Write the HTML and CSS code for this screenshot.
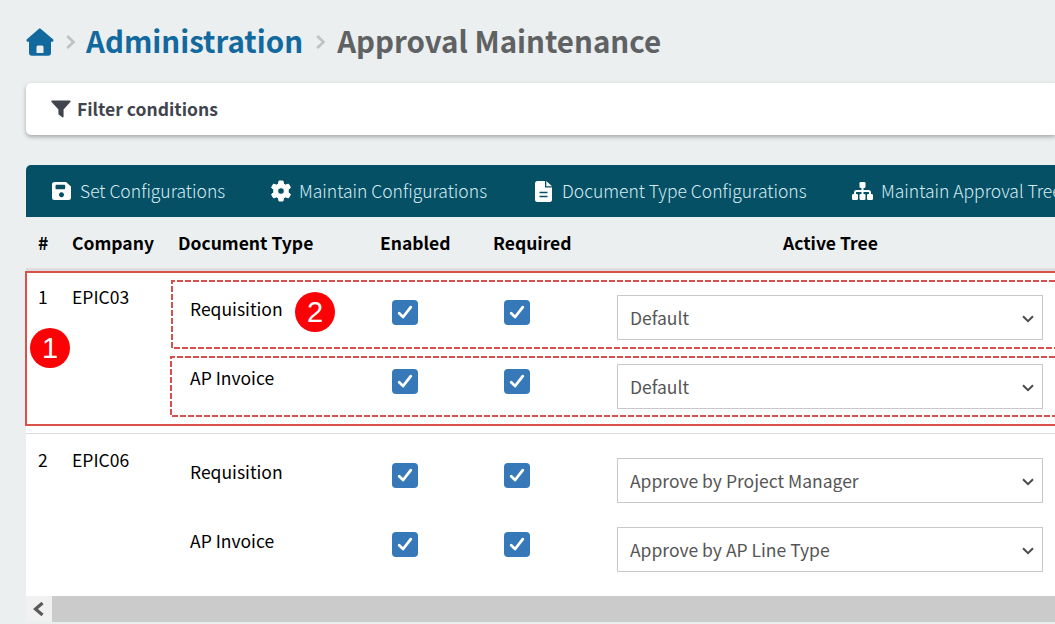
FILE: index.html
```html
<!DOCTYPE html>
<html lang="en">
  <head>
    <meta charset="UTF-8" />
    <meta name="viewport" content="width=device-width, initial-scale=1.0" />
    <title>Approval Maintenance</title>
    <link rel="stylesheet" href="styles.css">
  </head>
  <body>
    <!-- Shared icons -->
    <svg class="icon-defs">
      <symbol id="check" viewBox="0 0 26 25">
        <path d="M7.200 13.300l3.900 3.700L18.800 7.200" fill="none" stroke="#fff" stroke-width="2.800" stroke-linecap="round" stroke-linejoin="round" />
      </symbol>
      <symbol id="chevron" viewBox="0 0 12 8">
        <path d="M1 1.200l5 5 5-5" fill="none" stroke="#4a4a4a" stroke-width="2" />
      </symbol>
      <symbol id="separator" viewBox="0 0 10 14">
        <path d="M1.200 1l6.300 6-6.300 6" fill="none" stroke="#bfc1c3" stroke-width="2.600" />
      </symbol>
    </svg>

    <nav class="breadcrumb">
      <svg class="home" viewBox="0 0 28 28">
        <path fill="#12699e" fill-rule="evenodd" d="M13 .7q.8-.7 1.600 0L27 11.200q.8.8.3 1.700-.5.900-1.600.9H25v11q0 3-3 3H6q-3 0-3-3v-11h-.8q-1.100 0-1.600-.9-.5-.9.3-1.700zM12 17.500q-1.500 0-1.500 1.500V25h7v-6Q17.500 17.500 16 17.500z" />
      </svg>
      <svg class="separator"><use href="#separator" /></svg>
      <a class="crumb-link">Administration</a>
      <svg class="separator separator-last"><use href="#separator" /></svg>
      <span class="crumb-current">Approval Maintenance</span>
    </nav>

    <div class="filter-panel">
      <svg class="filter-icon" viewBox="0 0 21 18">
        <path fill="#3f444d" d="M1.200 0h18.500q1.300.2.800 1.500L13.200 9.500v7.700q-.3 1-1.300.5L8.300 15q-.5-.5-.5-1V9.500L.4 1.500Q-.1.200 1.200 0z" />
      </svg>
      <span>Filter conditions</span>
    </div>

    <div class="grid-panel">
      <div class="toolbar">
        <a class="tool tool-save">
          <svg width="19" height="18" viewBox="0 0 19 18">
            <path fill="#fff" fill-rule="evenodd" d="M2.500 0H14l5 4.500v11Q19 18 16.500 18h-14Q0 18 0 15.500v-13Q0 0 2.500 0zM4.500 2.700q-1 0-1 1v2.600q0 1 1 1h7.700q1 0 1-1V3.700q0-1-1-1zM9.500 10.300a2.500 2.500 0 1 0 .01 0z" />
          </svg>
          <span>Set Configurations</span>
        </a>
        <a class="tool tool-maintain">
          <svg width="22" height="22" viewBox="0 0 22 22">
            <path fill="#fff" fill-rule="evenodd" stroke="#fff" stroke-width="1" stroke-linejoin="round" d="M9 1h4l.6 3 1.900 1.100 3-1 2 3.500-2.300 2v2.800l2.300 2-2 3.500-3-1-1.900 1.100-.6 3H9l-.6-3-1.900-1.100-3 1-2-3.500 2.300-2V9.600l-2.300-2 2-3.500 3 1L8.400 4zM11 7.700a3.300 3.300 0 1 0 .01 0z" />
          </svg>
          <span>Maintain Configurations</span>
        </a>
        <a class="tool tool-document">
          <svg width="17" height="21" viewBox="0 0 17 21">
            <path fill="#fff" d="M2.500 0H10v6.500h7v12Q17 21 14.500 21h-12Q0 21 0 18.500v-16Q0 0 2.500 0zM11.300 0L17 5.300h-5.700z" />
            <path stroke="#065066" stroke-width="1.500" d="M4.500 11.400h8M4.500 15.400h8" />
          </svg>
          <span>Document Type Configurations</span>
        </a>
        <a class="tool tool-tree">
          <svg width="21" height="18" viewBox="0 0 21 18">
            <path fill="none" stroke="#fff" stroke-width="2" d="M10.500 4v10M3 14v-3.500Q3 9 4.500 9h12Q18 9 18 10.500V14" />
            <g fill="#fff">
              <rect x="7.500" y="0" width="6" height="6" rx="1.300" />
              <rect x="0" y="12" width="6" height="6" rx="1.300" />
              <rect x="7.500" y="12" width="6" height="6" rx="1.300" />
              <rect x="15" y="12" width="6" height="6" rx="1.300" />
            </g>
          </svg>
          <span>Maintain Approval Tree</span>
        </a>
      </div>

      <div class="columns table-head">
        <span>#</span>
        <span>Company</span>
        <span>Document Type</span>
        <span>Enabled</span>
        <span>Required</span>
        <span class="head-tree">Active Tree</span>
      </div>

      <div class="company-row">
        <span>1</span>
        <span>EPIC03</span>
        <div class="documents">
          <div class="document">
            <span>Requisition</span>
            <svg class="checkbox"><use href="#check" /></svg>
            <svg class="checkbox"><use href="#check" /></svg>
            <div class="select">Default<svg><use href="#chevron" /></svg></div>
          </div>
          <div class="document">
            <span>AP Invoice</span>
            <svg class="checkbox"><use href="#check" /></svg>
            <svg class="checkbox"><use href="#check" /></svg>
            <div class="select">Default<svg><use href="#chevron" /></svg></div>
          </div>
        </div>
      </div>

      <div class="company-row">
        <span>2</span>
        <span>EPIC06</span>
        <div class="documents">
          <div class="document">
            <span>Requisition</span>
            <svg class="checkbox"><use href="#check" /></svg>
            <svg class="checkbox"><use href="#check" /></svg>
            <div class="select">Approve by Project Manager<svg><use href="#chevron" /></svg></div>
          </div>
          <div class="document">
            <span>AP Invoice</span>
            <svg class="checkbox"><use href="#check" /></svg>
            <svg class="checkbox"><use href="#check" /></svg>
            <div class="select">Approve by AP Line Type<svg><use href="#chevron" /></svg></div>
          </div>
        </div>
      </div>

      <div class="scrollbar">
        <div class="scroll-button">
          <svg width="12" height="14" viewBox="0 0 12 14">
            <path d="M9.500 1L2.500 7l7 6" fill="none" stroke="#5a5a5a" stroke-width="3.200" />
          </svg>
        </div>
        <div class="scroll-thumb"></div>
      </div>
    </div>

    <!-- Callouts drawn over the table -->
    <div class="outline"></div>
    <svg class="dashes" width="1055" height="624">
      <path d="M1055 281H172V348H1055" />
      <path d="M1055 357H171V416H1055" />
    </svg>
    <div class="callout callout-one">1</div>
    <div class="callout callout-two">2</div>
  </body>
</html>
```

FILE: styles.css
```css
* {
  box-sizing: border-box;
}

body {
  position: relative;
  width: 1055px;
  height: 624px;
  margin: 0;
  padding-left: 26px;
  overflow: hidden;
  background-color: #ebeff0;
  color: #111;
  font-family: "Noto Sans CJK SC", "Noto Sans", sans-serif;
  font-size: 17.5px;
  line-height: 26px;
  white-space: nowrap;
}

svg {
  display: block;
  flex-shrink: 0;
}

.icon-defs {
  display: none;
}

.breadcrumb {
  display: flex;
  align-items: center;
  height: 83px;
  font-size: 29.5px;
  font-weight: bold;
  line-height: 40px;
}

.crumb-link,
.crumb-current {
  padding-bottom: 4px;
}

.home {
  width: 28px;
  height: 28px;
}

.separator {
  width: 10px;
  height: 14px;
  margin: 0 10px 0 12px;
}

.separator-last {
  margin: 0 11px 0 13px;
}

.crumb-link {
  color: #12699e;
}

.crumb-current {
  color: #606163;
}

.filter-panel {
  display: flex;
  align-items: center;
  gap: 6px;
  height: 52px;
  padding-left: 25px;
  border-radius: 5px 0 0 5px;
  background-color: #fff;
  box-shadow: 0 2px 4px rgba(0, 0, 0, 0.3);
  color: #3f444d;
  font-weight: bold;
}

.filter-icon {
  width: 20px;
  height: 18px;
}

.grid-panel {
  margin-top: 30px;
}

.toolbar {
  display: flex;
  height: 52px;
  padding-left: 26px;
  border-radius: 5px 0 0 0;
  background-color: #065066;
  color: #d5ecf3;
  font-weight: 300;
}

.tool {
  display: flex;
  align-items: center;
  gap: 9px;
  flex-shrink: 0;
}

.tool-save {
  width: 218px;
}

.tool-maintain {
  width: 265px;
  gap: 7px;
}

.tool-document {
  width: 317px;
  gap: 10px;
}

.tool-tree {
  gap: 8px;
}

.columns {
  display: grid;
  grid-template-columns: 34px 106px 202px 113px 112px 450px;
}

.table-head {
  align-items: center;
  height: 53px;
  padding-left: 12px;
  border-bottom: 2px solid #ddd;
  color: #000;
  font-weight: bold;
}

.head-tree {
  padding-left: 178px;
}

.company-row {
  display: grid;
  grid-template-columns: 34px 118px 877px;
  height: 163px;
  padding: 12px 0 12px 12px;
  border-top: 1px solid #ddd;
  background-color: #fff;
  color: #000;
  line-height: 28px;
}

.document {
  display: grid;
  grid-template-columns: 202px 112.4px 112.6px 426px;
  align-items: start;
  height: 69px;
  padding-top: 12px;
}

.checkbox {
  width: 26px;
  height: 25px;
  margin-top: 5px;
  border-radius: 4px;
  background-color: #3678b8;
}

.select {
  display: flex;
  align-items: center;
  justify-content: space-between;
  height: 45px;
  padding: 0 8px 0 12px;
  border: 1px solid #c8c8cb;
  color: #555;
}

.select svg {
  width: 12px;
  height: 8px;
  margin-top: 3px;
}

.scrollbar {
  display: flex;
  height: 26px;
}

.scroll-button {
  display: flex;
  align-items: center;
  justify-content: center;
  width: 26px;
  background-color: #f1f1f1;
}

.scroll-thumb {
  flex: 1;
  background-color: #cbcbcb;
}

.outline {
  position: absolute;
  top: 271px;
  left: 25px;
  width: 1040px;
  height: 155px;
  border: 2px solid #dc504c;
}

.dashes {
  position: absolute;
  top: 0;
  left: 0;
  fill: none;
  stroke: #d8504c;
  stroke-width: 2;
  stroke-dasharray: 6 2;
}

.callout {
  position: absolute;
  width: 40px;
  height: 40px;
  border-radius: 50%;
  background-color: #fb0207;
  color: #fff;
  font-family: "Liberation Sans", Arial, sans-serif;
  font-size: 29px;
  line-height: 41px;
  text-align: center;
}

.callout-one {
  top: 328px;
  left: 30px;
}

.callout-two {
  top: 292px;
  left: 295px;
}
```
